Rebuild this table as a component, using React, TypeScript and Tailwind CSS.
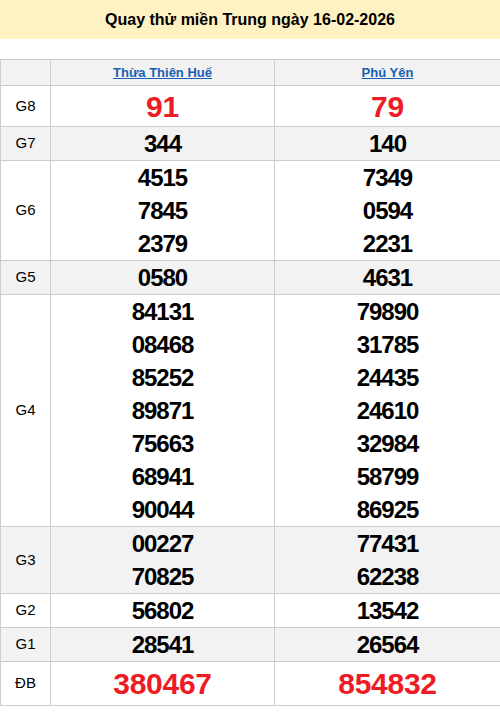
import React from "react";

interface Prize {
  label: string;
  a: string[];
  b: string[];
  big?: boolean;
  h?: string;
}

// ket qua quay thu
const prizes: Prize[] = [
  { label: "G8", a: ["91"], b: ["79"], big: true, h: "h-[41px]" },
  { label: "G7", a: ["344"], b: ["140"] },
  { label: "G6", a: ["4515", "7845", "2379"], b: ["7349", "0594", "2231"] },
  { label: "G5", a: ["0580"], b: ["4631"] },
  {
    label: "G4",
    a: ["84131", "08468", "85252", "89871", "75663", "68941", "90044"],
    b: ["79890", "31785", "24435", "24610", "32984", "58799", "86925"],
  },
  { label: "G3", a: ["00227", "70825"], b: ["77431", "62238"] },
  { label: "G2", a: ["56802"], b: ["13542"] },
  { label: "G1", a: ["28541"], b: ["26564"] },
  { label: "ĐB", a: ["380467"], b: ["854832"], big: true, h: "h-[44px]" },
];

const NumCell = ({ nums, big }: { nums: string[]; big?: boolean }) => (
  <td className="border border-[#cccccc] p-0 text-center align-middle">
    {nums.map((n, i) => (
      <div
        key={i}
        className={
          big
            ? "text-[30px] leading-[33px] font-bold text-[#ed1c24] tracking-[-0.3px]"
            : "text-[24px] leading-[33px] font-bold text-black tracking-[-1px]"
        }
      >
        {n}
      </div>
    ))}
  </td>
);

export default function App() {
  return (
    <div className="w-[500px] bg-white font-['Liberation_Sans',Arial,sans-serif]">
      <div className="h-[39px] bg-[#fff2c2] flex items-center justify-center text-[16px] font-bold text-black">
        Quay thử miền Trung ngày 16-02-2026
      </div>

      <table className="mt-[20px] w-[500px] border-collapse table-fixed">
        <colgroup>
          <col className="w-[50px]" />
          <col className="w-[224px]" />
          <col className="w-[226px]" />
        </colgroup>
        <thead>
          <tr className="h-[26px] bg-[#f2f2f2]">
            <th className="border border-[#cccccc] p-0"></th>
            <th className="border border-[#cccccc] p-0 text-[13px] font-bold">
              <a className="text-[#1a5fb4] underline">Thừa Thiên Huế</a>
            </th>
            <th className="border border-[#cccccc] p-0 text-[13px] font-bold">
              <a className="text-[#1a5fb4] underline">Phú Yên</a>
            </th>
          </tr>
        </thead>
        <tbody>
          {prizes.map((p, i) => (
            <tr
              key={p.label}
              className={`${i % 2 === 1 ? "bg-[#f2f2f2]" : "bg-white"} ${p.h ?? ""}`}
            >
              <td className="border border-[#cccccc] p-0 text-center text-[15px] font-normal text-black">
                {p.label}
              </td>
              <NumCell nums={p.a} big={p.big} />
              <NumCell nums={p.b} big={p.big} />
            </tr>
          ))}
        </tbody>
      </table>
    </div>
  );
}
